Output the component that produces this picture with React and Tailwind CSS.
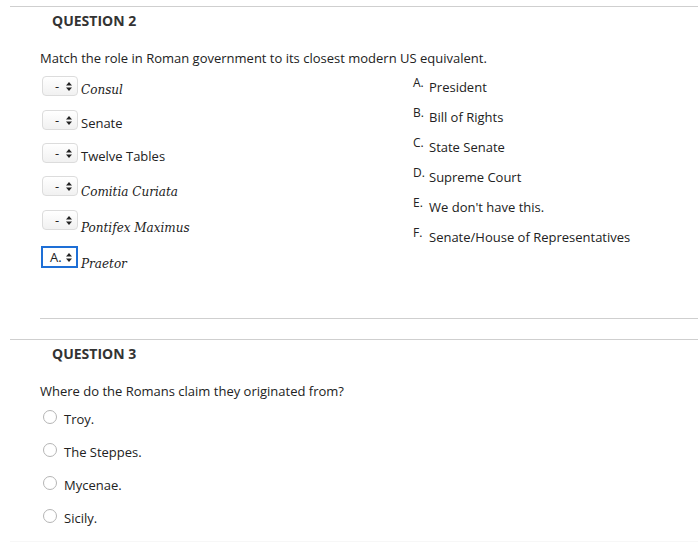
import React from 'react';

const pairs = [
  { label: 'Consul', italic: true, h: 'h-[34px]', lt: 'mt-[5px]' },
  { label: 'Senate', h: 'h-[33px]', lt: 'mt-[4px]' },
  { label: 'Twelve Tables', h: 'h-[33px]', lt: 'mt-[4px]' },
  { label: 'Comitia Curiata', italic: true, h: 'h-[34px]', lt: 'mt-[7px]' },
  { label: 'Pontifex Maximus', italic: true, h: 'h-[37px]', lt: 'mt-[9px]' },
  { label: 'Praetor', italic: true, h: 'h-[30px]', lt: 'mt-[8px]', value: 'A.' },
];

const answers = [
  ['A.', 'President'],
  ['B.', 'Bill of Rights'],
  ['C.', 'State Senate'],
  ['D.', 'Supreme Court'],
  ['E.', "We don't have this."],
  ['F.', 'Senate/House of Representatives'],
];

const choices = ['Troy.', 'The Steppes.', 'Mycenae.', 'Sicily.'];

function Arrows() {
  return (
    <svg width="6" height="9" viewBox="0 0 6 9" className="shrink-0">
      <path d="M3 0 L6 3.5 L0 3.5 Z" fill="#222" />
      <path d="M0 5.5 L6 5.5 L3 9 Z" fill="#222" />
    </svg>
  );
}

function Select({ value }) {
  if (value) {
    return (
      <div className="-ml-[1px] -mt-[1px] flex h-[22px] w-[37px] shrink-0 items-center border-2 border-[#1e6fd6] bg-white pl-[7px] pr-[4px]">
        <span className="flex-1 text-[13px] leading-none text-[#222]">{value}</span>
        <Arrows />
      </div>
    );
  }
  return (
    <div className="flex h-[20px] w-[36px] shrink-0 items-center rounded-[4px] border border-[#dcdcdc] bg-gradient-to-b from-white to-[#f1f1f1] pl-[12px] pr-[5px]">
      <span className="flex-1 text-[13px] leading-none text-[#222]">-</span>
      <Arrows />
    </div>
  );
}

export default function App() {
  return (
    <div className="h-[542px] w-[698px] overflow-hidden bg-white font-['Open_Sans',sans-serif] text-[13px] text-[#222]">
      <div className="h-[6px]" />
      <div className="ml-[10px] border-t border-[#cfcfcf]">
        <h2 className="pl-[42px] pt-[4px] text-[14px] font-bold leading-[20px] text-[#333]">QUESTION 2</h2>
        <p className="mt-[17px] pl-[30px] leading-[20px]">Match the role in Roman government to its closest modern US equivalent.</p>
        <div className="mt-[8px] flex h-[242px] pl-[32px]">
          <div className="w-[371px]">
            {pairs.map((p) => (
              <div key={p.label} className={`flex items-start ${p.h}`}>
                <Select value={p.value} />
                <span
                  className={`${p.lt} ml-[3px] leading-[18px] ${
                    p.italic ? "font-['DejaVu_Serif',serif] text-[12px] italic" : ''
                  }`}
                >
                  {p.label}
                </span>
              </div>
            ))}
          </div>
          <div>
            {answers.map(([k, v]) => (
              <div key={k} className="flex h-[30px] items-start">
                <span className="w-[16px] text-[12px] leading-[14px]">{k}</span>
                <span className="mt-[2px] leading-[18px]">{v}</span>
              </div>
            ))}
          </div>
        </div>
        <div className="ml-[30px] border-t border-[#cfcfcf]" />
        <div className="h-[20px]" />
      </div>
      <div className="ml-[10px] border-t border-[#cfcfcf]">
        <h2 className="pl-[42px] pt-[4px] text-[14px] font-bold leading-[20px] text-[#333]">QUESTION 3</h2>
        <p className="mt-[17px] pl-[30px] leading-[20px]">Where do the Romans claim they originated from?</p>
        <div className="mt-[8px] pl-[33px]">
          {choices.map((c) => (
            <div key={c} className="flex h-[33px] items-start">
              <span className="mt-[1px] h-[14px] w-[14px] shrink-0 rounded-full border border-[#b5b5b5] bg-white" />
              <span className="ml-[7px] mt-[1px] leading-[18px]">{c}</span>
            </div>
          ))}
        </div>
        <div className="h-[4px] bg-[#f7f7f7]" />
      </div>
    </div>
  );
}
